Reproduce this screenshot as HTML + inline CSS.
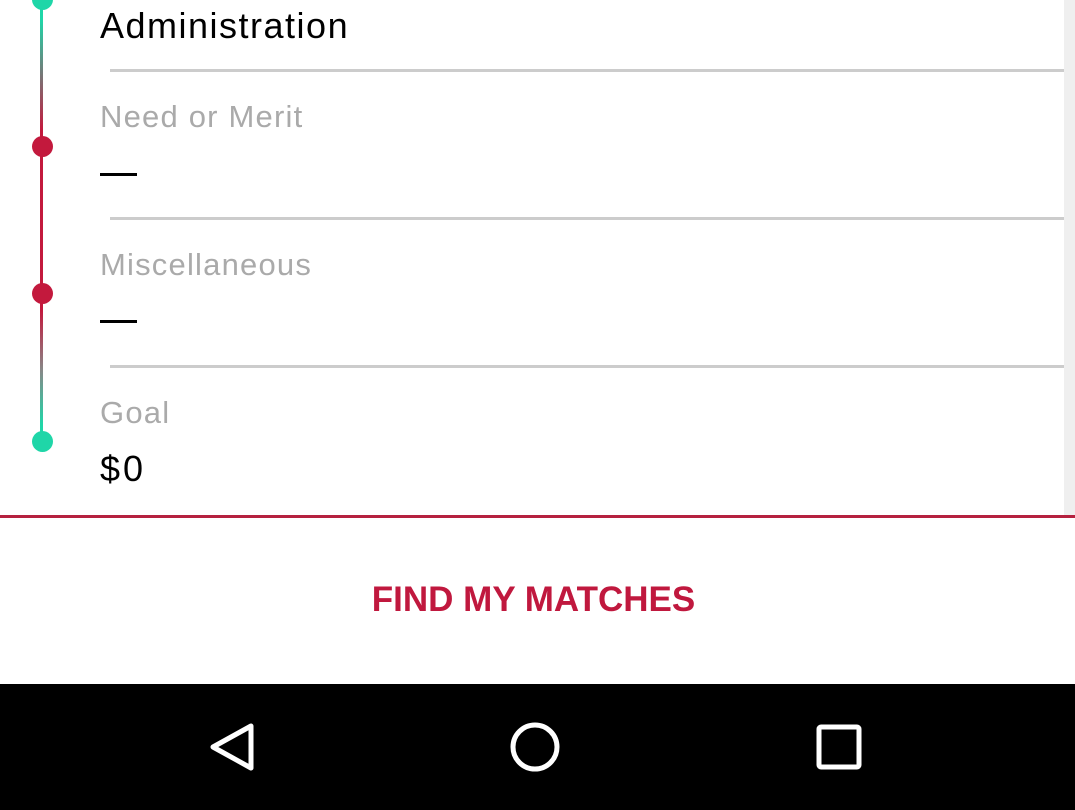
<!DOCTYPE html>
<html><head><style>
body{margin:0;width:1075px;height:810px;position:relative;background:#fff;overflow:hidden;font-family:"Liberation Sans",sans-serif}
.a{position:absolute}
.lab{position:absolute;left:100px;font-size:31px;color:#aaa;line-height:1;letter-spacing:1.2px}
.val{position:absolute;left:100px;font-size:36px;color:#000;line-height:1;letter-spacing:1.5px}
.div{position:absolute;left:110px;width:954px;height:3px;background:#ccc}
.dot{position:absolute;left:32px;width:21px;height:21px;border-radius:50%}
</style></head><body>
<div class="a" style="left:1064px;top:0;width:11px;height:516px;background:#efefef"></div>
<div class="a" style="left:40px;top:0;width:3px;height:441px;background:linear-gradient(#1fd6a8 0px,#1fd6a8 20px,#777 75px,#c3193d 130px,#c3193d 310px,#888 370px,#1fd6a8 425px)"></div>
<div class="dot" style="top:-11px;background:#1fd6a8"></div>
<div class="dot" style="top:136px;background:#c3193d"></div>
<div class="dot" style="top:283px;background:#c3193d"></div>
<div class="dot" style="top:431px;background:#1fd6a8"></div>
<div class="val" style="top:8px">Administration</div>
<div class="div" style="top:69px"></div>
<div class="lab" style="top:101px">Need or Merit</div>
<div class="a" style="left:100px;top:173px;width:37px;height:3px;background:#000"></div>
<div class="div" style="top:217px"></div>
<div class="lab" style="top:249px">Miscellaneous</div>
<div class="a" style="left:100px;top:320px;width:37px;height:3px;background:#000"></div>
<div class="div" style="top:365px"></div>
<div class="lab" style="top:397px">Goal</div>
<div class="val" style="top:451px;letter-spacing:3px">$0</div>
<div class="a" style="left:0;top:515px;width:1075px;height:3px;background:#b5213f"></div>
<div class="a" style="left:-4px;top:582px;width:1075px;text-align:center;font-size:35px;font-weight:bold;color:#c0183e;line-height:1">FIND MY MATCHES</div>
<div class="a" style="left:0;top:684px;width:1075px;height:126px;background:#000">
<svg width="1075" height="126" style="position:absolute;left:0;top:0">
<path d="M251 42 L213 63 L251 84 Z" fill="none" stroke="#fff" stroke-width="5" stroke-linejoin="round"/>
<circle cx="535" cy="63" r="22" fill="none" stroke="#fff" stroke-width="5"/>
<rect x="819" y="43" width="40" height="40" rx="2" fill="none" stroke="#fff" stroke-width="5"/>
</svg></div>
</body></html>
